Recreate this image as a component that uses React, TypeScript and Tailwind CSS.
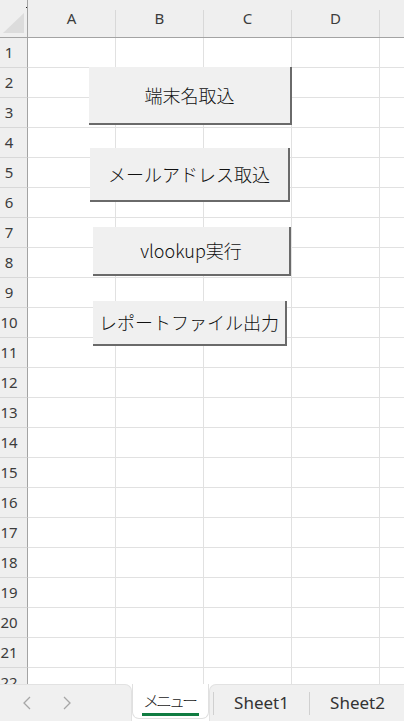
import React from "react";

const COLS = ["A", "B", "C", "D"];
const ROWS = Array.from({ length: 22 }, (_, i) => i + 1);

const hdrFont = { fontFamily: '"Noto Sans", "Open Sans", sans-serif' };
const jpFont = { fontFamily: '"Noto Sans CJK JP", "Noto Sans", sans-serif' };

function SheetButton({ className, label }: { className: string; label: string }) {
  return (
    <div
      className={`absolute flex items-center justify-center bg-[#f0f0f0] border-r-2 border-b-2 border-[#6a6a6a] text-[18px] font-light text-[#111111] ${className}`}
      style={jpFont}
    >
      {label}
    </div>
  );
}

export default function App() {
  return (
    <div className="w-[404px] h-[721px] flex flex-col bg-white overflow-hidden">
      <div className="relative flex-1 overflow-hidden">
        {/* header row */}
        <div className="flex h-[38px] border-b border-[#a3a3a3] bg-[#efefef]">
          <div className="w-[28px] shrink-0 border-r border-[#a3a3a3] relative">
            <svg width="27" height="37" className="block">
              <polygon points="3,33 24,33 24,13" fill="#dcdcdc" />
              <rect x="26" y="7" width="1" height="1" fill="#222" />
            </svg>
          </div>
          {COLS.map((c) => (
            <div key={c} className="w-[88px] shrink-0 flex">
              <div className="flex-1 flex items-center justify-center text-[15px] text-[#3c3c3c]" style={hdrFont}>
                {c}
              </div>
              <div className="w-px h-[27px] self-end bg-[#d8d8d8]" />
            </div>
          ))}
          <div className="flex-1" />
        </div>
        {/* rows */}
        {ROWS.map((r) => (
          <div key={r} className="flex h-[30px]">
            <div className="w-[28px] shrink-0 bg-[#efefef] border-r border-[#a3a3a3] border-b border-b-[#d8d8d8] flex items-center">
              <div className="w-[18px] text-center text-[15px] text-[#3c3c3c] leading-none" style={hdrFont}>
                {r}
              </div>
            </div>
            {COLS.map((c) => (
              <div key={c} className="w-[88px] shrink-0 border-r border-b border-[#e1e1e1]" />
            ))}
            <div className="flex-1 border-b border-[#e1e1e1]" />
          </div>
        ))}

        <SheetButton className="left-[89px] top-[67px] w-[203px] h-[58px]" label="端末名取込" />
        <SheetButton className="left-[90px] top-[148px] w-[200px] h-[54px]" label="メールアドレス取込" />
        <SheetButton className="left-[93px] top-[227px] w-[198px] h-[49px]" label="vlookup実行" />
        <SheetButton className="left-[93px] top-[301px] w-[194px] h-[45px]" label="レポートファイル出力" />
      </div>

      {/* tab bar */}
      <div className="h-[37px] shrink-0 flex bg-white">
        <div className="w-[132px] shrink-0 bg-[#f0f0f0] rounded-tr-[7px] border-t border-r border-[#e2e2e2] flex items-center">
          <svg width="10" height="14" className="ml-[22px]" viewBox="0 0 10 14">
            <polyline points="8,1 2,7 8,13" fill="none" stroke="#a6a6a6" strokeWidth="1.3" />
          </svg>
          <svg width="10" height="14" className="ml-[30px]" viewBox="0 0 10 14">
            <polyline points="2,1 8,7 2,13" fill="none" stroke="#a6a6a6" strokeWidth="1.3" />
          </svg>
        </div>
        <div className="w-[77px] shrink-0 h-[35px] bg-white rounded-b-[7px] border-x border-b border-[#e0e0e0] flex flex-col items-center">
          <div className="mt-[5px] text-[16px] font-light tracking-[-3px] leading-[22px] text-[#222222] pr-[3px]" style={jpFont}>
            メニュー
          </div>
          <div className="mt-[2px] w-[57px] h-[3px] bg-[#107c41]" />
        </div>
        <div className="flex-1 bg-[#f0f0f0] rounded-tl-[7px] border-t border-l border-[#e2e2e2] flex items-center">
          <div className="w-px h-[23px] bg-[#d0d0d0] ml-[3px]" />
          <div className="w-[95px] text-center text-[17px] text-[#333333]" style={hdrFont}>
            Sheet1
          </div>
          <div className="w-px h-[23px] bg-[#d0d0d0]" />
          <div className="w-[95px] text-center text-[17px] text-[#333333]" style={hdrFont}>
            Sheet2
          </div>
        </div>
      </div>
    </div>
  );
}
